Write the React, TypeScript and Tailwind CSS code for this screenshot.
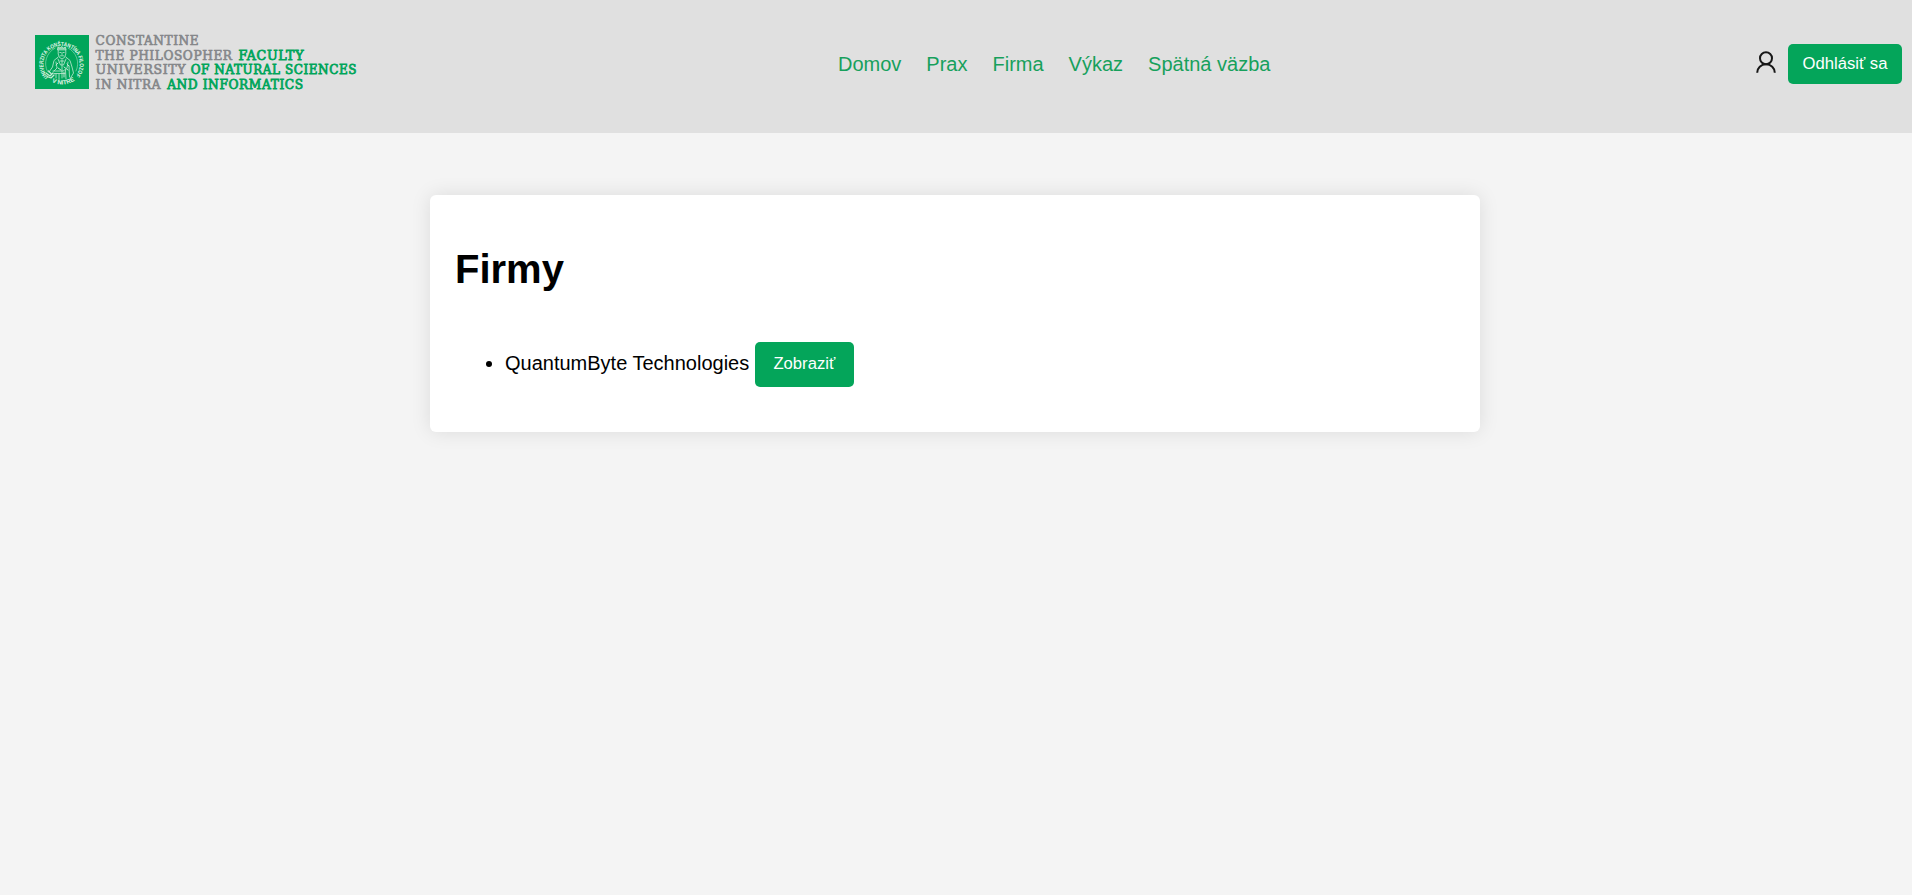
import React from "react";

const links = ["Domov", "Prax", "Firma", "Výkaz", "Spätná väzba"];

function Seal() {
  return (
    <g>
      <rect x="0" y="2" width="54" height="54" fill="#00a55a" />
      <defs>
        <path id="ringTop" d="M 13.5 43.9 A 18.2 18.2 0 1 1 40.2 43.1" />
        <path id="ringBottom" d="M 15.5 48.2 A 22.6 22.6 0 0 0 40.5 47" />
      </defs>
      <g fill="#e3f5ea" fontFamily="Liberation Sans, sans-serif" fontWeight="700">
        <text fontSize="5.8">
          <textPath href="#ringTop" textLength="86" lengthAdjust="spacingAndGlyphs">
            UNIVERZITA KONŠTANTÍNA FILOZOFA
          </textPath>
        </text>
        <text fontSize="6">
          <textPath href="#ringBottom" startOffset="1.5" textLength="24" lengthAdjust="spacingAndGlyphs">
            V NITRE
          </textPath>
        </text>
      </g>
      <g transform="translate(0 2)" fill="none" stroke="#c3e9d3" strokeWidth="0.8" strokeLinecap="round" strokeLinejoin="round">
        <path d="M12.5 36.5 A17 17 0 0 1 20 13.2 M33 13 A17 17 0 0 1 41 36" strokeWidth="0.5" />
        <path d="M22.5 14.5 L23 12 L25 13 L26.7 11.5 L28.5 13 L30.5 12 L31 14.5 Z" fill="#8fd6ae" />
        <path d="M23.2 15 V19 Q23.8 23.3 27 24 Q30.2 23.3 30.8 19 V15" />
        <path d="M24.8 17.5 H26 M28 17.5 H29.2 M25.5 20.8 H28.5 M27 18 V19.5" />
        <path d="M23.2 22 L19 25.5 L17.5 32 L14 37 M30.8 22 L35 25.5 L37 32 L38.5 38 L35.5 43" />
        <path d="M23 24 L25.5 30 L28.5 30 L31 24 M25 26 H29 M27 25 V43 M21 27 L22 33 L19 36 M33 27 L32 33" />
        <path d="M18 36 H28 L31 34 M19 38.5 H30 M21 39 V43 M24 39 V44.5 M30.5 35 L31 44 M34 31 L34.5 42" />
        <path d="M11 38 L15 41 L18 38 M12 41.5 L16 43 L19 40 M13.5 36 L16 38.5" strokeWidth="1.2" />
        <path d="M21 30 L23 28 M32 29 L34 31 M29 32 L33 35 M23 33 L26 35 M29 37 V42" strokeWidth="1" />
      </g>
    </g>
  );
}

function Logo() {
  return (
    <svg width="330" height="70" viewBox="0 0 330 70" className="shrink-0" aria-label="Constantine the Philosopher University">
      <Seal />
      <g fontFamily="DejaVu Serif, serif" fontSize="12.6" letterSpacing="0.6" fill="#85878a" stroke="#85878a" strokeWidth="0.65">
        <text x="60.6" y="11.8" textLength="103.5" lengthAdjust="spacingAndGlyphs">CONSTANTINE</text>
        <text x="60.6" y="26.5" textLength="137" lengthAdjust="spacingAndGlyphs">THE PHILOSOPHER</text>
        <text x="60.6" y="41.1" textLength="90.5" lengthAdjust="spacingAndGlyphs">UNIVERSITY</text>
        <text x="60.6" y="55.7" textLength="65.5" lengthAdjust="spacingAndGlyphs">IN NITRA</text>
      </g>
      <g fontFamily="DejaVu Serif, serif" fontSize="12.6" letterSpacing="0.6" fill="#00a55a" stroke="#00a55a" strokeWidth="0.8">
        <text x="203.6" y="26.5" textLength="65.5" lengthAdjust="spacingAndGlyphs">FACULTY</text>
        <text x="155.7" y="41.1" textLength="166.3" lengthAdjust="spacingAndGlyphs">OF NATURAL SCIENCES</text>
        <text x="132.2" y="55.7" textLength="136.5" lengthAdjust="spacingAndGlyphs">AND INFORMATICS</text>
      </g>
    </svg>
  );
}

export default function App() {
  return (
    <div className="min-h-screen bg-[#f4f4f4] font-['Liberation_Sans',Arial,sans-serif] text-xl text-black">
      <header className="grid h-[133px] grid-cols-[838px_1fr_auto] items-start bg-[#e0e0e0] pr-2.5">
        <div className="pt-[33px] pl-[35px]">
          <Logo />
        </div>
        <nav className="flex gap-[25px] pt-[50px] leading-7 text-[#17a05c]">
          {links.map((label) => (
            <a key={label} href="#" className="whitespace-nowrap">
              {label}
            </a>
          ))}
        </nav>
        <div className="flex gap-3 pt-11">
          <svg width="20" height="24" viewBox="0 0 20 24" fill="none" stroke="#171717" strokeWidth="2" className="mt-[6px]">
            <circle cx="10" cy="8.3" r="6" />
            <path d="M1.2 22.8 C1.2 17.8 5 14.3 10 14.3 S18.8 17.8 18.8 22.8" />
          </svg>
          <button className="h-10 w-[114px] rounded-[5px] bg-[#04a55a] text-[16.67px] leading-5 whitespace-nowrap text-white">
            Odhlásiť sa
          </button>
        </div>
      </header>
      <main className="flow-root">
        <section className="mt-[62px] ml-[430px] h-[237px] w-[1050px] rounded-[6px] bg-white px-[25px] pt-[51px] shadow-[0_0_20px_rgba(0,0,0,0.1)]">
          <h1 className="text-[40px] leading-[46px] font-bold">Firmy</h1>
          <ul className="mt-[49px] list-disc pl-[50px]">
            <li className="leading-[45px]">
              <span>QuantumByte Technologies </span>
              <button className="-mt-px mb-px h-[45px] w-[99px] rounded-[5px] bg-[#04a55a] align-[1px] text-[16.67px] leading-5 text-white">
                Zobraziť
              </button>
            </li>
          </ul>
        </section>
      </main>
    </div>
  );
}
